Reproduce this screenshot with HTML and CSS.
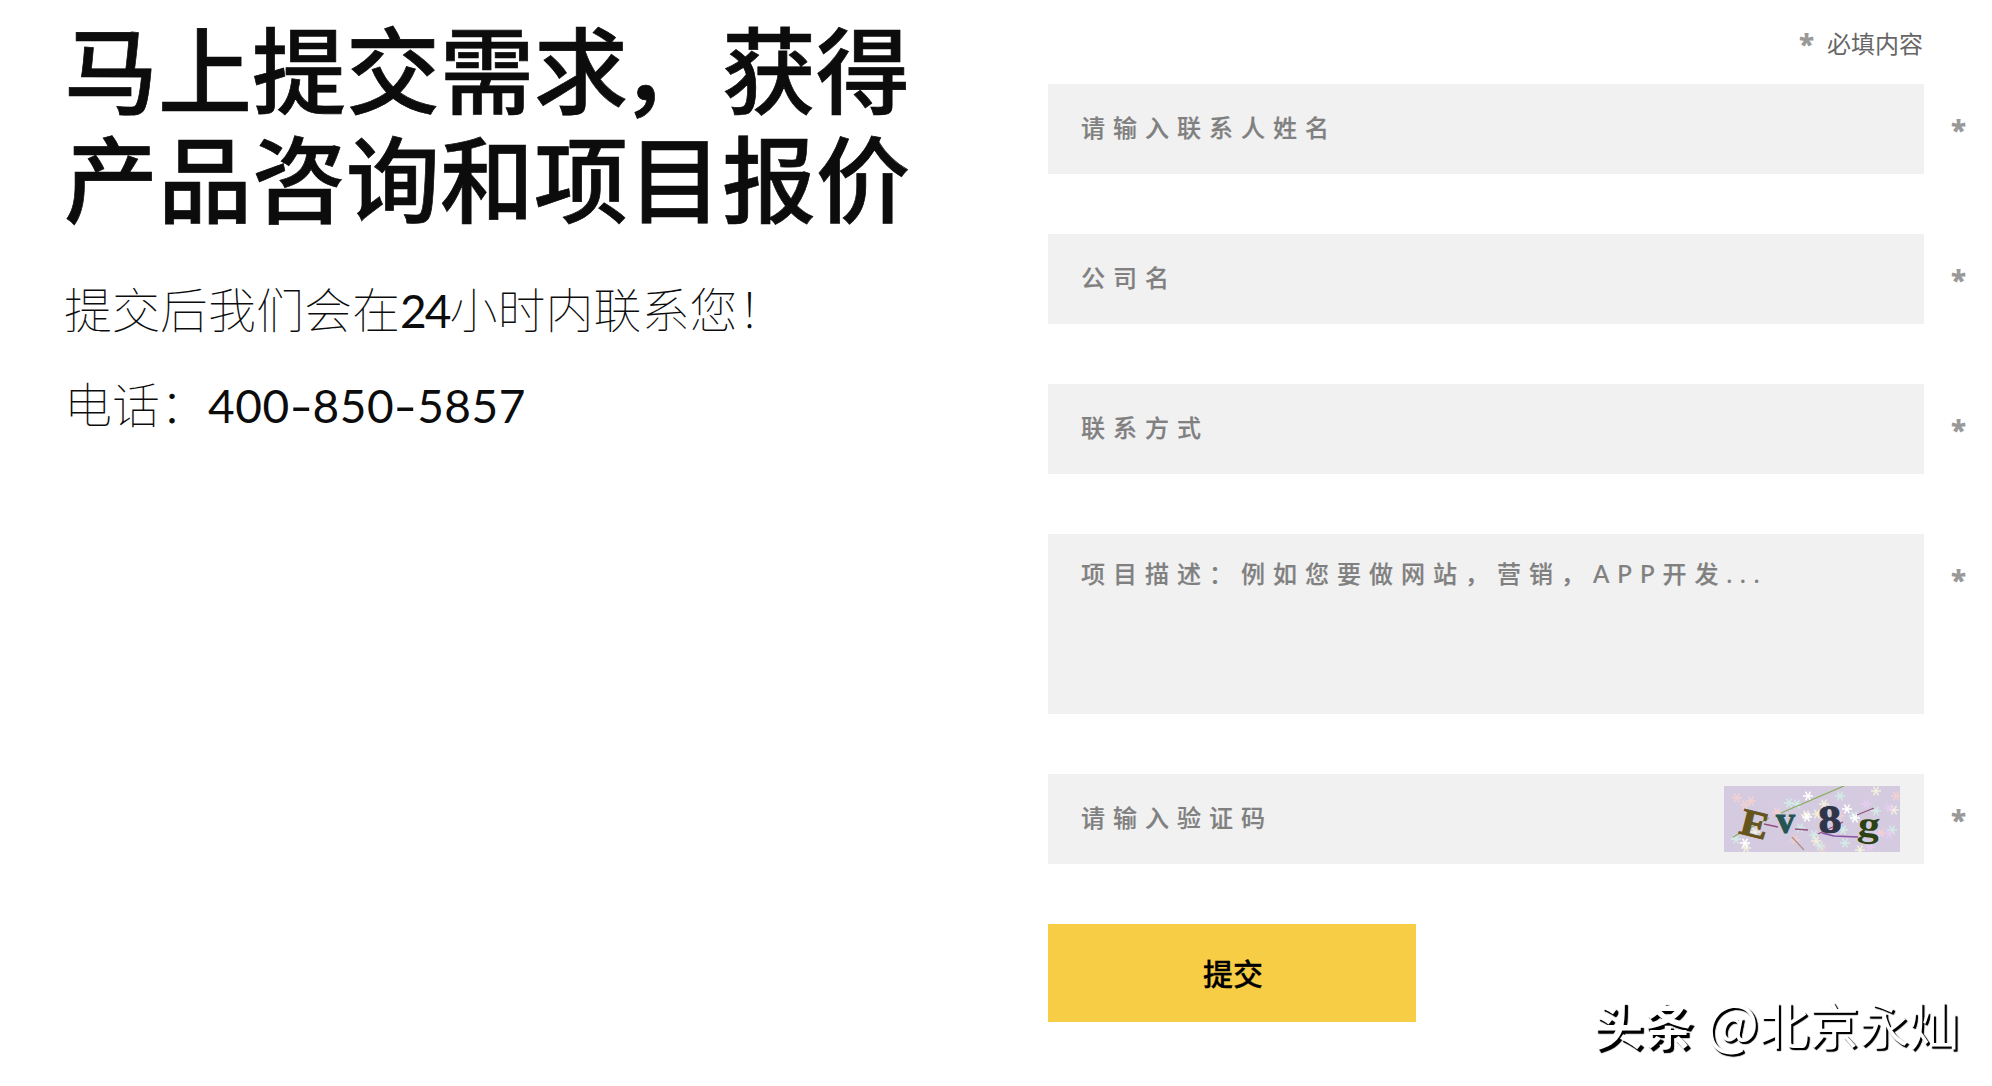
FILE: index.html
```html
<!DOCTYPE html>
<html lang="zh-CN">
<head>
<meta charset="UTF-8">
<meta name="viewport" content="width=device-width, initial-scale=1">
<title>提交需求</title>
<link rel="stylesheet" href="styles.css">
</head>
<body>

<div class="contact">
  <div class="intro">
    <h2>马上提交需求<span class="comma">，</span>获得<br>产品咨询和项目报价</h2>
    <p>提交后我们会在<span class="num">24</span>小时内联系您！</p>
    <p>电话<span class="colon">：</span><span class="num tel">400<i>-</i>850<i>-</i>5857</span></p>
  </div>

  <form class="contact-form">
    <div class="tips"><span class="star">*</span>必填内容</div>
    <div class="field">
      <input type="text" placeholder="请输入联系人姓名">
      <span class="star">*</span>
    </div>
    <div class="field">
      <input type="text" placeholder="公司名">
      <span class="star">*</span>
    </div>
    <div class="field">
      <input type="text" placeholder="联系方式">
      <span class="star">*</span>
    </div>
    <div class="field">
      <textarea placeholder="项目描述：例如您要做网站，营销，APP开发..."></textarea>
      <span class="star">*</span>
    </div>
    <div class="field">
      <input type="text" placeholder="请输入验证码">
      <svg class="captcha" width="176" height="66" viewBox="0 0 176 66">
        <defs>
          <path id="flake" d="M-5 0H5M-2.5 -4.3L2.5 4.3M-2.5 4.3L2.5 -4.3" stroke-width="1.5"/>
        </defs>
        <rect width="176" height="66" fill="#d5cbe0"/>
        <!-- noise -->
        <g stroke="#f3d0d0">
          <use href="#flake" x="13" y="12"/><use href="#flake" x="27" y="15"/><use href="#flake" x="21" y="19"/>
          <use href="#flake" x="53" y="26"/><use href="#flake" x="71" y="54"/><use href="#flake" x="172" y="10"/>
          <use href="#flake" x="157" y="47"/><use href="#flake" x="115" y="30"/><use href="#flake" x="98" y="62"/>
        </g>
        <g stroke="#d3ebe5">
          <use href="#flake" x="73" y="18"/><use href="#flake" x="116" y="10"/><use href="#flake" x="65" y="17"/>
          <use href="#flake" x="76" y="42"/><use href="#flake" x="90" y="49"/><use href="#flake" x="121" y="57"/>
          <use href="#flake" x="130" y="30"/><use href="#flake" x="152" y="25"/><use href="#flake" x="168" y="44"/>
          <use href="#flake" x="12" y="53"/><use href="#flake" x="119" y="44"/><use href="#flake" x="96" y="60"/>
        </g>
        <g stroke="#f1f0dc">
          <use href="#flake" x="152" y="5"/><use href="#flake" x="31" y="46"/><use href="#flake" x="82" y="29"/>
          <use href="#flake" x="93" y="28"/><use href="#flake" x="100" y="18"/><use href="#flake" x="22" y="62"/>
          <use href="#flake" x="136" y="64"/><use href="#flake" x="92" y="55"/><use href="#flake" x="170" y="24"/>
        </g>
        <g stroke="#fff">
          <use href="#flake" x="83" y="31"/><use href="#flake" x="21" y="57"/><use href="#flake" x="123" y="23"/>
          <use href="#flake" x="84" y="10"/><use href="#flake" x="131" y="32"/>
        </g>
        <g stroke="#e5cdf0">
          <use href="#flake" x="165" y="22"/><use href="#flake" x="165" y="48"/><use href="#flake" x="153" y="49"/>
          <use href="#flake" x="146" y="61"/><use href="#flake" x="142" y="18"/>
        </g>
        <g fill="none" stroke-width="1.3">
          <path d="M9 51L45 32M57 27L120 0" stroke="#86ad5a"/>
          <path d="M40 38L54 41M71 43L84 44M94 48L119 36M133 29L150 22" stroke="#92507f"/>
          <path d="M98 47L110 50L134 51" stroke="#8b52a5" stroke-width="1.6"/>
          <path d="M68 51L80 64" stroke="#b48f85"/>
        </g>
        <g class="captcha-text">
          <text x="14" y="47" font-size="38" fill="#65551d" stroke="#65551d" textLength="28" lengthAdjust="spacingAndGlyphs" transform="rotate(14 14 47)">E</text>
          <text x="52" y="47" font-size="38" fill="#245550" stroke="#245550" textLength="19" lengthAdjust="spacingAndGlyphs">v</text>
          <text x="95" y="47" font-size="39" fill="#2f3548" stroke="#2f3548" textLength="23" lengthAdjust="spacingAndGlyphs" transform="rotate(-3 96 47)">8</text>
          <text x="133" y="49" font-size="36" fill="#2b4312" textLength="22" lengthAdjust="spacingAndGlyphs" transform="rotate(6 132 50)">g</text>
        </g>
      </svg>
      <span class="star">*</span>
    </div>
    <button type="button" class="submit">提交</button>
  </form>
</div>

<div class="watermark"><b>头条</b><span><span class="at">@</span>北京永灿</span></div>

</body>
</html>
```

FILE: styles.css
```css
* {
  box-sizing: border-box;
}

body {
  margin: 0;
  height: 1086px;
  overflow: hidden;
  background: #fff;
  color: #0c0c0c;
  font-family: "Noto Sans CJK SC", sans-serif;
}

.contact {
  display: flex;
}

.intro {
  width: 1048px;
  padding: 12px 0 0 64px;
}

.intro h2 {
  margin: 0 0 41px;
  font-size: 94px;
  font-weight: 500;
  line-height: 109px;
  letter-spacing: 0;
  white-space: nowrap;
  -webkit-text-stroke: 0.7px #0c0c0c;
}

.comma {
  position: relative;
  left: -7px;
}

.intro p {
  height: 72px;
  margin: 0 0 23px;
  font-size: 48px;
  font-weight: 100;
  line-height: 72px;
  white-space: nowrap;
}

.num {
  font-family: Lato, sans-serif;
  font-weight: 400;
  font-size: 46px;
  line-height: 1;
  letter-spacing: -2px;
}

.tel {
  letter-spacing: 0.5px;
}

.tel i {
  display: inline-block;
  width: 23px;
  font-style: normal;
  text-align: center;
  transform: scaleX(1.4);
}

.contact-form {
  width: 876px;
}

.tips {
  display: flex;
  justify-content: flex-end;
  align-items: center;
  gap: 13px;
  height: 84px;
  padding: 0 1px 0 0;
  color: #666;
  font-size: 24px;
}

.star {
  color: #999;
  font-family: "Open Sans", sans-serif;
  font-size: 28px;
  font-weight: 800;
  line-height: 38px;
}

.tips .star {
  padding-top: 4px;
}

.field {
  position: relative;
  margin-bottom: 60px;
}

.field input,
.field textarea {
  display: block;
  width: 100%;
  height: 90px;
  margin: 0;
  padding: 0 32px 3px 33px;
  border: 0;
  border-radius: 0;
  outline: none;
  resize: none;
  background: #f1f1f1;
  color: #333;
  font-family: Lato, "Noto Sans CJK SC", sans-serif;
  font-size: 24px;
  font-weight: 500;
  letter-spacing: 8px;
}

.field textarea {
  height: 180px;
  padding-top: 22px;
  line-height: 36px;
}

.field ::placeholder {
  color: #808080;
  opacity: 1;
  -webkit-text-stroke: 0.2px #808080;
}

.field .star {
  position: absolute;
  top: 27px;
  right: -42px;
}

.captcha {
  position: absolute;
  top: 12px;
  right: 24px;
}

.captcha-text {
  font-family: "Liberation Serif", serif;
  font-weight: 700;
}

.submit {
  display: block;
  width: 368px;
  height: 98px;
  padding: 0 0 3px 2px;
  border: 0;
  background: #f7cd45;
  color: #000;
  font-family: "Noto Sans CJK SC", sans-serif;
  font-size: 30px;
  font-weight: 500;
  -webkit-text-stroke: 0.3px #000;
}

/* white letters, only the shadow is visible */
.watermark {
  position: absolute;
  right: 33px;
  bottom: 27px;
  display: flex;
  gap: 13px;
  color: #fff;
  font-size: 50px;
  line-height: 72px;
  font-weight: 400;
  text-shadow: 2px 2px 1px #000, 2px 2px 1px #000;
  white-space: nowrap;
}

.watermark b {
  font-weight: 700;
  text-shadow: 3px 3px 1px #000, 3px 3px 1px #000;
}

.watermark .at {
  font-size: 56px;
  line-height: 1;
}
```
